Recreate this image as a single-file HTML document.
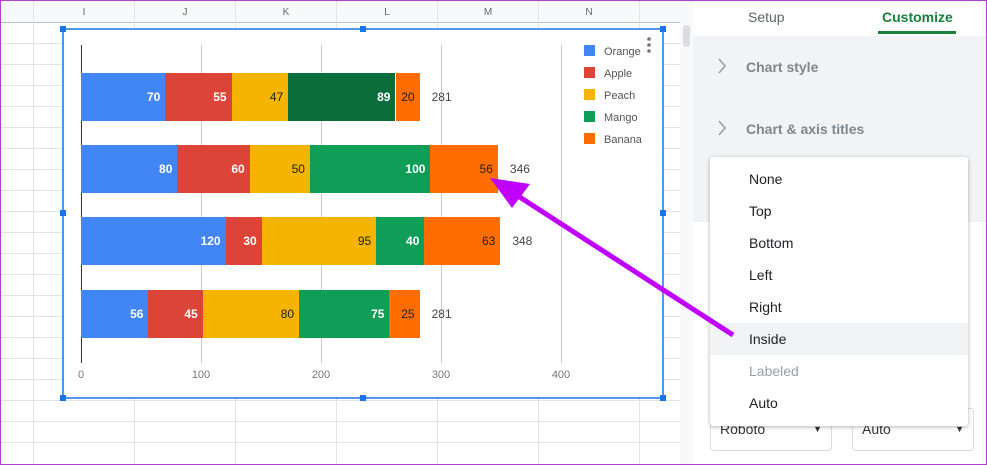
<!DOCTYPE html><html><head><style>
body{margin:0;width:987px;height:465px;overflow:hidden;position:relative;font-family:"Liberation Sans",Arial,sans-serif;background:#fff}
.a{position:absolute}
.b{position:absolute;height:48px;font-size:12px;line-height:48px;text-align:right;box-sizing:border-box;padding-right:5px;font-weight:bold}
.lg{position:absolute;left:584px;font-size:11px;color:#555}
.lg i{display:inline-block;width:11px;height:11px;margin-right:9px;vertical-align:-1px}
.it{position:absolute;left:0;width:258px;height:32px;line-height:32px;padding-left:39px;box-sizing:border-box;font-size:14px;color:#202124}
</style></head><body>
<svg class="a" style="left:0;top:0" width="693" height="465">
<rect x="0" y="0" width="693" height="22" fill="#f8f9fa"/>
<g stroke="#e2e3e3" stroke-width="1">
<line x1="0" y1="22.5" x2="693" y2="22.5" stroke="#c0c0c0"/>
<line x1="33.5" y1="0" x2="33.5" y2="465"/><line x1="134.5" y1="0" x2="134.5" y2="465"/><line x1="235.5" y1="0" x2="235.5" y2="465"/><line x1="336.5" y1="0" x2="336.5" y2="465"/><line x1="437.5" y1="0" x2="437.5" y2="465"/><line x1="538.5" y1="0" x2="538.5" y2="465"/><line x1="639.5" y1="0" x2="639.5" y2="465"/>
<line x1="0" y1="43.5" x2="680" y2="43.5"/><line x1="0" y1="64.5" x2="680" y2="64.5"/><line x1="0" y1="85.5" x2="680" y2="85.5"/><line x1="0" y1="106.5" x2="680" y2="106.5"/><line x1="0" y1="127.5" x2="680" y2="127.5"/><line x1="0" y1="148.5" x2="680" y2="148.5"/><line x1="0" y1="169.5" x2="680" y2="169.5"/><line x1="0" y1="190.5" x2="680" y2="190.5"/><line x1="0" y1="211.5" x2="680" y2="211.5"/><line x1="0" y1="232.5" x2="680" y2="232.5"/><line x1="0" y1="253.5" x2="680" y2="253.5"/><line x1="0" y1="274.5" x2="680" y2="274.5"/><line x1="0" y1="295.5" x2="680" y2="295.5"/><line x1="0" y1="316.5" x2="680" y2="316.5"/><line x1="0" y1="337.5" x2="680" y2="337.5"/><line x1="0" y1="358.5" x2="680" y2="358.5"/><line x1="0" y1="379.5" x2="680" y2="379.5"/><line x1="0" y1="400.5" x2="680" y2="400.5"/><line x1="0" y1="421.5" x2="680" y2="421.5"/><line x1="0" y1="442.5" x2="680" y2="442.5"/>
</g>
<g font-size="10" fill="#666" text-anchor="middle"><text x="84" y="15">I</text><text x="185" y="15">J</text><text x="286" y="15">K</text><text x="387" y="15">L</text><text x="488" y="15">M</text><text x="589" y="15">N</text></g>
<rect x="680" y="0" width="13" height="465" fill="#f8f9fa"/>
<rect x="683" y="25" width="7" height="22" rx="3" fill="#dadce0"/>
<rect x="63" y="29" width="600" height="369" fill="#fff" stroke="#1a73e8" stroke-width="1.5"/>
<g fill="#1a73e8"><rect x="60" y="26" width="6" height="6"/><rect x="360" y="26" width="6" height="6"/><rect x="660" y="26" width="6" height="6"/><rect x="60" y="210" width="6" height="6"/><rect x="660" y="210" width="6" height="6"/><rect x="60" y="395" width="6" height="6"/><rect x="360" y="395" width="6" height="6"/><rect x="660" y="395" width="6" height="6"/></g>
<g stroke="#ccc"><line x1="201.5" y1="45" x2="201.5" y2="363"/><line x1="321.5" y1="45" x2="321.5" y2="363"/><line x1="441.5" y1="45" x2="441.5" y2="363"/><line x1="561.5" y1="45" x2="561.5" y2="363"/></g>
<line x1="81.5" y1="45" x2="81.5" y2="363" stroke="#333"/>
<g font-size="11" fill="#777" text-anchor="middle"><text x="81" y="378">0</text><text x="201" y="378">100</text><text x="321" y="378">200</text><text x="441" y="378">300</text><text x="561" y="378">400</text></g>
<g fill="#777"><circle cx="649" cy="39" r="1.8"/><circle cx="649" cy="45" r="1.8"/><circle cx="649" cy="51" r="1.8"/></g>
</svg>
<div id="bars"></div>
<div class="lg" style="top:45px"><i style="background:#4285f4"></i>Orange</div>
<div class="lg" style="top:67px"><i style="background:#db4437"></i>Apple</div>
<div class="lg" style="top:89px"><i style="background:#f4b400"></i>Peach</div>
<div class="lg" style="top:111px"><i style="background:#0f9d58"></i>Mango</div>
<div class="lg" style="top:133px"><i style="background:#ff6d00"></i>Banana</div>
<script>
var rows=[[73,[70,55,47,89,20],281],[145,[80,60,50,100,56],346],[217,[120,30,95,40,63],348],[290,[56,45,80,75,25],281]];
var col=['#4285f4','#db4437','#f4b400','#0f9d58','#ff6d00'],tc=['#fff','#fff','#222','#fff','#222'];
var h='';rows.forEach(function(r,ri){var x=81;r[1].forEach(function(v,i){var w=v*1.205;var c=col[i];if(ri==0&&i==3)c='#0b6e3d';h+='<div class="b" style="left:'+x+'px;top:'+r[0]+'px;width:'+w+'px;background:'+c+';color:'+tc[i]+';font-weight:'+(tc[i]=='#fff'?'bold':'normal')+'">'+v+'</div>';x+=w;});h+='<div class="a" style="left:'+(x+12)+'px;top:'+r[0]+'px;line-height:48px;font-size:12px;color:#444">'+r[2]+'</div>';});
document.getElementById('bars').innerHTML=h;
</script>
<div class="a" style="left:693px;top:0;width:294px;height:36px;background:#fff"></div>
<div class="a" style="left:748px;top:9px;font-size:14px;color:#5f6368">Setup</div>
<div class="a" style="left:882px;top:9px;font-size:14px;color:#188038;font-weight:bold">Customize</div>
<div class="a" style="left:878px;top:31px;width:78px;height:3px;background:#188038"></div>
<div class="a" style="left:693px;top:36px;width:294px;height:186px;background:#f1f3f4"></div>
<div class="a" style="left:693px;top:222px;width:294px;height:243px;background:#fff"></div>
<svg class="a" style="left:714px;top:56px" width="16" height="90"><path d="M5 3 L11 10 L5 17 M5 65 L11 72 L5 79" fill="none" stroke="#9aa0a6" stroke-width="1.6"/></svg>
<div class="a" style="left:746px;top:59px;font-size:14px;color:#80868b;font-weight:bold">Chart style</div>
<div class="a" style="left:746px;top:121px;font-size:14px;color:#80868b;font-weight:bold">Chart &amp; axis titles</div>
<div class="a" style="left:710px;top:408px;width:120px;height:41px;border:1px solid #dadce0;border-radius:4px;font-size:14px;line-height:41px;color:#333"><span style="margin-left:9px">Roboto</span><span style="position:absolute;right:9px;font-size:9px">&#9660;</span></div>
<div class="a" style="left:852px;top:408px;width:120px;height:41px;border:1px solid #dadce0;border-radius:4px;font-size:14px;line-height:41px;color:#333"><span style="margin-left:9px">Auto</span><span style="position:absolute;right:9px;font-size:9px">&#9660;</span></div>
<div class="a" style="left:710px;top:157px;width:258px;height:269px;background:#fff;box-shadow:0 1px 4px rgba(0,0,0,.3);border-radius:3px">
<div class="it" style="top:6px">None</div><div class="it" style="top:38px">Top</div><div class="it" style="top:70px">Bottom</div><div class="it" style="top:102px">Left</div><div class="it" style="top:134px">Right</div><div class="it" style="top:166px;background:#f1f3f4">Inside</div><div class="it" style="top:198px;color:#9aa0a6">Labeled</div><div class="it" style="top:230px">Auto</div>
</div>
<svg class="a" style="left:0;top:0" width="987" height="465"><line x1="733" y1="335" x2="515" y2="194" stroke="#c000ff" stroke-width="5"/><polygon points="490,178 530,184 512,208" fill="#c000ff"/></svg>
<div class="a" style="left:0;top:0;width:985px;height:463px;border:1px solid #b040d0"></div>
</body></html>
